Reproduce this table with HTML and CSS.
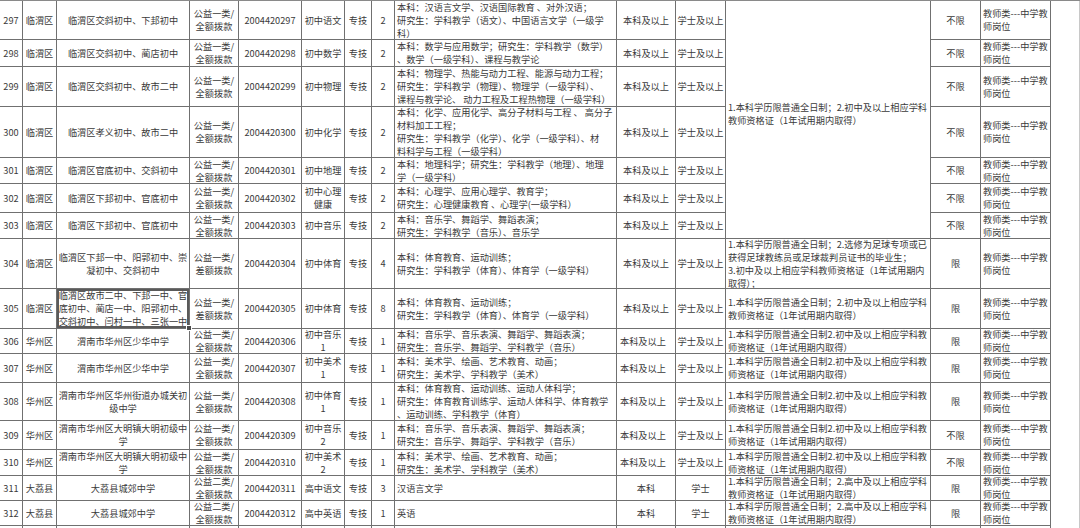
FILE: index.html
```html
<!DOCTYPE html>
<html lang="zh-CN">
<head>
<meta charset="utf-8">
<title>岗位表</title>
<link rel="stylesheet" href="styles.css">
</head>
<body>
<div class="sheet">
  <div class="blank"></div>

  <!-- 297 -->
  <div class="c"><span>297</span></div>
  <div class="c"><span>临渭区</span></div>
  <div class="c"><span>临渭区交斜初中、下邽初中</span></div>
  <div class="c"><span>公益一类/<br>全额拨款</span></div>
  <div class="c"><span>2004420297</span></div>
  <div class="c"><span>初中语文</span></div>
  <div class="c"><span>专技</span></div>
  <div class="c"><span>2</span></div>
  <div class="c l"><span>本科：汉语言文学、汉语国际教育 、对外汉语；<br>研究生：学科教学（语文）、中国语言文学（一级学<br>科）</span></div>
  <div class="c"><span>本科及以上</span></div>
  <div class="c"><span>学士及以上</span></div>
  <div class="c l merged"><span>1.本科学历限普通全日制；2.初中及以上相应学科<br>教师资格证（1年试用期内取得）</span></div>
  <div class="c"><span>不限</span></div>
  <div class="c l"><span>教师类---中学教<br>师岗位</span></div>

  <!-- 298 -->
  <div class="c"><span>298</span></div>
  <div class="c"><span>临渭区</span></div>
  <div class="c"><span>临渭区交斜初中、蔺店初中</span></div>
  <div class="c"><span>公益一类/<br>全额拨款</span></div>
  <div class="c"><span>2004420298</span></div>
  <div class="c"><span>初中数学</span></div>
  <div class="c"><span>专技</span></div>
  <div class="c"><span>2</span></div>
  <div class="c l"><span>本科：数学与应用数学；研究生：学科教学（数学）<br>、数学（一级学科）、课程与教学论</span></div>
  <div class="c"><span>本科及以上</span></div>
  <div class="c"><span>学士及以上</span></div>
  <div class="c"><span>不限</span></div>
  <div class="c l"><span>教师类---中学教<br>师岗位</span></div>

  <!-- 299 -->
  <div class="c"><span>299</span></div>
  <div class="c"><span>临渭区</span></div>
  <div class="c"><span>临渭区交斜初中、故市二中</span></div>
  <div class="c"><span>公益一类/<br>全额拨款</span></div>
  <div class="c"><span>2004420299</span></div>
  <div class="c"><span>初中物理</span></div>
  <div class="c"><span>专技</span></div>
  <div class="c"><span>2</span></div>
  <div class="c l"><span>本科：物理学、热能与动力工程、能源与动力工程；<br>研究生：学科教学（物理）、物理学（一级学科）、<br>课程与教学论、 动力工程及工程热物理（一级学科）</span></div>
  <div class="c"><span>本科及以上</span></div>
  <div class="c"><span>学士及以上</span></div>
  <div class="c"><span>不限</span></div>
  <div class="c l"><span>教师类---中学教<br>师岗位</span></div>

  <!-- 300 -->
  <div class="c"><span>300</span></div>
  <div class="c"><span>临渭区</span></div>
  <div class="c"><span>临渭区孝义初中、故市二中</span></div>
  <div class="c"><span>公益一类/<br>全额拨款</span></div>
  <div class="c"><span>2004420300</span></div>
  <div class="c"><span>初中化学</span></div>
  <div class="c"><span>专技</span></div>
  <div class="c"><span>2</span></div>
  <div class="c l"><span>本科：化学、应用化学、高分子材料与工程 、 高分子<br>材料加工工程；<br>研究生：学科教学（化学）、化学（一级学科）、材<br>料科学与工程（一级学科）</span></div>
  <div class="c"><span>本科及以上</span></div>
  <div class="c"><span>学士及以上</span></div>
  <div class="c"><span>不限</span></div>
  <div class="c l"><span>教师类---中学教<br>师岗位</span></div>

  <!-- 301 -->
  <div class="c"><span>301</span></div>
  <div class="c"><span>临渭区</span></div>
  <div class="c"><span>临渭区官底初中、交斜初中</span></div>
  <div class="c"><span>公益一类/<br>全额拨款</span></div>
  <div class="c"><span>2004420301</span></div>
  <div class="c"><span>初中地理</span></div>
  <div class="c"><span>专技</span></div>
  <div class="c"><span>2</span></div>
  <div class="c l"><span>本科：地理科学；研究生：学科教学（地理）、地理<br>学（一级学科）</span></div>
  <div class="c"><span>本科及以上</span></div>
  <div class="c"><span>学士及以上</span></div>
  <div class="c"><span>不限</span></div>
  <div class="c l"><span>教师类---中学教<br>师岗位</span></div>

  <!-- 302 -->
  <div class="c"><span>302</span></div>
  <div class="c"><span>临渭区</span></div>
  <div class="c"><span>临渭区下邽初中、官底初中</span></div>
  <div class="c"><span>公益一类/<br>全额拨款</span></div>
  <div class="c"><span>2004420302</span></div>
  <div class="c"><span>初中心理<br>健康</span></div>
  <div class="c"><span>专技</span></div>
  <div class="c"><span>2</span></div>
  <div class="c l"><span>本科：心理学、应用心理学、教育学；<br>研究生：心理健康教育 、心理学(一级学科）</span></div>
  <div class="c"><span>本科及以上</span></div>
  <div class="c"><span>学士及以上</span></div>
  <div class="c"><span>不限</span></div>
  <div class="c l"><span>教师类---中学教<br>师岗位</span></div>

  <!-- 303 -->
  <div class="c"><span>303</span></div>
  <div class="c"><span>临渭区</span></div>
  <div class="c"><span>临渭区下邽初中、官底初中</span></div>
  <div class="c"><span>公益一类/<br>全额拨款</span></div>
  <div class="c"><span>2004420303</span></div>
  <div class="c"><span>初中音乐</span></div>
  <div class="c"><span>专技</span></div>
  <div class="c"><span>2</span></div>
  <div class="c l"><span>本科：音乐学、舞蹈学、舞蹈表演；<br>研究生：学科教学（音乐）、音乐学</span></div>
  <div class="c"><span>本科及以上</span></div>
  <div class="c"><span>学士及以上</span></div>
  <div class="c"><span>不限</span></div>
  <div class="c l"><span>教师类---中学教<br>师岗位</span></div>

  <!-- 304 -->
  <div class="c"><span>304</span></div>
  <div class="c"><span>临渭区</span></div>
  <div class="c"><span>临渭区下邽一中、阳郭初中、崇<br>凝初中、交斜初中</span></div>
  <div class="c"><span>公益一类/<br>差额拨款</span></div>
  <div class="c"><span>2004420304</span></div>
  <div class="c"><span>初中体育</span></div>
  <div class="c"><span>专技</span></div>
  <div class="c"><span>4</span></div>
  <div class="c l"><span>本科：体育教育、运动训练；<br>研究生：学科教学（体育）、体育学（一级学科）</span></div>
  <div class="c"><span>本科及以上</span></div>
  <div class="c"><span>学士及以上</span></div>
  <div class="c l"><span>1.本科学历限普通全日制；2.选修为足球专项或已<br>获得足球教练员或足球裁判员证书的毕业生；<br>3.初中及以上相应学科教师资格证（1年试用期内<br>取得）；</span></div>
  <div class="c"><span>限</span></div>
  <div class="c l"><span>教师类---中学教<br>师岗位</span></div>

  <!-- 305 -->
  <div class="c"><span>305</span></div>
  <div class="c"><span>临渭区</span></div>
  <div class="c sel"><span>临渭区故市二中、下邽一中、官<br>底初中、蔺店一中、阳郭初中、<br>交斜初中、闫村一中、三张一中</span></div>
  <div class="c"><span>公益一类/<br>差额拨款</span></div>
  <div class="c"><span>2004420305</span></div>
  <div class="c"><span>初中体育</span></div>
  <div class="c"><span>专技</span></div>
  <div class="c"><span>8</span></div>
  <div class="c l"><span>本科：体育教育、运动训练；<br>研究生：学科教学（体育）、体育学（一级学科）</span></div>
  <div class="c"><span>本科及以上</span></div>
  <div class="c"><span>学士及以上</span></div>
  <div class="c l"><span>1.本科学历限普通全日制；2.初中及以上相应学科<br>教师资格证（1年试用期内取得）</span></div>
  <div class="c"><span>限</span></div>
  <div class="c l"><span>教师类---中学教<br>师岗位</span></div>

  <!-- 306 -->
  <div class="c"><span>306</span></div>
  <div class="c"><span>华州区</span></div>
  <div class="c"><span>渭南市华州区少华中学</span></div>
  <div class="c"><span>公益一类/<br>全额拨款</span></div>
  <div class="c"><span>2004420306</span></div>
  <div class="c"><span>初中音乐<br>1</span></div>
  <div class="c"><span>专技</span></div>
  <div class="c"><span>1</span></div>
  <div class="c l"><span>本科：音乐学、音乐表演、舞蹈学、舞蹈表演；<br>研究生：音乐学、舞蹈学、学科教学（音乐）</span></div>
  <div class="c lft"><span>本科及以上</span></div>
  <div class="c"><span>学士及以上</span></div>
  <div class="c l"><span>1.本科学历限普通全日制2.初中及以上相应学科教<br>师资格证（1年试用期内取得）</span></div>
  <div class="c"><span>限</span></div>
  <div class="c l"><span>教师类---中学教<br>师岗位</span></div>

  <!-- 307 -->
  <div class="c"><span>307</span></div>
  <div class="c"><span>华州区</span></div>
  <div class="c"><span>渭南市华州区少华中学</span></div>
  <div class="c"><span>公益一类/<br>全额拨款</span></div>
  <div class="c"><span>2004420307</span></div>
  <div class="c"><span>初中美术<br>1</span></div>
  <div class="c"><span>专技</span></div>
  <div class="c"><span>1</span></div>
  <div class="c l"><span>本科：美术学、绘画、艺术教育、动画；<br>研究生：美术学、学科教学（美术）</span></div>
  <div class="c lft"><span>本科及以上</span></div>
  <div class="c"><span>学士及以上</span></div>
  <div class="c l"><span>1.本科学历限普通全日制2.初中及以上相应学科教<br>师资格证（1年试用期内取得）</span></div>
  <div class="c"><span>限</span></div>
  <div class="c l"><span>教师类---中学教<br>师岗位</span></div>

  <!-- 308 -->
  <div class="c"><span>308</span></div>
  <div class="c"><span>华州区</span></div>
  <div class="c"><span>渭南市华州区华州街道办城关初<br>级中学</span></div>
  <div class="c"><span>公益一类/<br>全额拨款</span></div>
  <div class="c"><span>2004420308</span></div>
  <div class="c"><span>初中体育<br>1</span></div>
  <div class="c"><span>专技</span></div>
  <div class="c"><span>1</span></div>
  <div class="c l"><span>本科：体育教育、运动训练、运动人体科学；<br>研究生：体育教育训练学、运动人体科学、体育教学<br>、运动训练、学科教学（体育）</span></div>
  <div class="c lft"><span>本科及以上</span></div>
  <div class="c"><span>学士及以上</span></div>
  <div class="c l"><span>1.本科学历限普通全日制2.初中及以上相应学科教<br>师资格证（1年试用期内取得）</span></div>
  <div class="c"><span>限</span></div>
  <div class="c l"><span>教师类---中学教<br>师岗位</span></div>

  <!-- 309 -->
  <div class="c"><span>309</span></div>
  <div class="c"><span>华州区</span></div>
  <div class="c"><span>渭南市华州区大明镇大明初级中<br>学</span></div>
  <div class="c"><span>公益一类/<br>全额拨款</span></div>
  <div class="c"><span>2004420309</span></div>
  <div class="c"><span>初中音乐<br>2</span></div>
  <div class="c"><span>专技</span></div>
  <div class="c"><span>1</span></div>
  <div class="c l"><span>本科：音乐学、音乐表演、舞蹈学、舞蹈表演；<br>研究生：音乐学、舞蹈学、学科教学（音乐）</span></div>
  <div class="c lft"><span>本科及以上</span></div>
  <div class="c"><span>学士及以上</span></div>
  <div class="c l"><span>1.本科学历限普通全日制2.初中及以上相应学科教<br>师资格证（1年试用期内取得）</span></div>
  <div class="c"><span>不限</span></div>
  <div class="c l"><span>教师类---中学教<br>师岗位</span></div>

  <!-- 310 -->
  <div class="c"><span>310</span></div>
  <div class="c"><span>华州区</span></div>
  <div class="c"><span>渭南市华州区大明镇大明初级中<br>学</span></div>
  <div class="c"><span>公益一类/<br>全额拨款</span></div>
  <div class="c"><span>2004420310</span></div>
  <div class="c"><span>初中美术<br>2</span></div>
  <div class="c"><span>专技</span></div>
  <div class="c"><span>1</span></div>
  <div class="c l"><span>本科：美术学、绘画、艺术教育、动画；<br>研究生：美术学、学科教学（美术）</span></div>
  <div class="c lft"><span>本科及以上</span></div>
  <div class="c"><span>学士及以上</span></div>
  <div class="c l"><span>1.本科学历限普通全日制2.初中及以上相应学科教<br>师资格证（1年试用期内取得）</span></div>
  <div class="c"><span>不限</span></div>
  <div class="c l"><span>教师类---中学教<br>师岗位</span></div>

  <!-- 311 -->
  <div class="c"><span>311</span></div>
  <div class="c"><span>大荔县</span></div>
  <div class="c"><span>大荔县城郊中学</span></div>
  <div class="c"><span>公益二类/<br>全额拨款</span></div>
  <div class="c"><span>2004420311</span></div>
  <div class="c"><span>高中语文</span></div>
  <div class="c"><span>专技</span></div>
  <div class="c"><span>3</span></div>
  <div class="c l"><span>汉语言文学</span></div>
  <div class="c"><span>本科</span></div>
  <div class="c"><span>学士</span></div>
  <div class="c l"><span>1.本科学历限普通全日制；2.高中及以上相应学科<br>教师资格证（1年试用期内取得）</span></div>
  <div class="c"><span>限</span></div>
  <div class="c l"><span>教师类---中学教<br>师岗位</span></div>

  <!-- 312 -->
  <div class="c"><span>312</span></div>
  <div class="c"><span>大荔县</span></div>
  <div class="c"><span>大荔县城郊中学</span></div>
  <div class="c"><span>公益二类/<br>全额拨款</span></div>
  <div class="c"><span>2004420312</span></div>
  <div class="c"><span>高中英语</span></div>
  <div class="c"><span>专技</span></div>
  <div class="c"><span>1</span></div>
  <div class="c l"><span>英语</span></div>
  <div class="c"><span>本科</span></div>
  <div class="c"><span>学士</span></div>
  <div class="c l"><span>1.本科学历限普通全日制；2.高中及以上相应学科<br>教师资格证（1年试用期内取得）</span></div>
  <div class="c"><span>限</span></div>
  <div class="c l"><span>教师类---中学教<br>师岗位</span></div>

  <!-- partial next row -->
  <div class="c"></div><div class="c"></div><div class="c"></div><div class="c"></div>
  <div class="c"></div><div class="c"></div><div class="c"></div><div class="c"></div>
  <div class="c"></div><div class="c"></div><div class="c"></div><div class="c"></div>
  <div class="c"></div><div class="c"></div>
</div>
</body>
</html>
```

FILE: styles.css
```css
html, body {
  margin: 0;
  padding: 0;
  background: #ffffff;
}

body {
  font-family: "Noto Sans CJK SC", "Noto Sans", sans-serif;
  font-size: 9.2px;
  color: #3a3a3a;
  overflow: hidden;
}

.sheet {
  display: grid;
  width: 1080px;
  height: 528px;
  overflow: hidden;
  border-top: 1px solid #8a8a8a;
  grid-template-columns: 23px 34px 133px 49px 63px 43px 27px 23px 222px 59px 50px 205px 50px 70px 29px;
  grid-template-rows: 39px 27px 40px 51px 26px 29px 26px 50px 40px 25px 29px 38px 29px 26px 25px 25px 30px;
}

.c {
  box-sizing: border-box;
  border-right: 1px solid #707070;
  border-bottom: 1px solid #707070;
  display: flex;
  align-items: center;
  justify-content: center;
  text-align: center;
  overflow: hidden;
  white-space: nowrap;
  line-height: 13px;
  min-width: 0;
}

.c > span {
  display: block;
}

.l {
  justify-content: flex-start;
  text-align: left;
  padding-left: 2px;
}

.lft {
  justify-content: flex-start;
  padding-left: 3px;
}

.merged {
  grid-row: span 7;
  padding-bottom: 12px;
}

.sel {
  position: relative;
  overflow: visible;
  box-shadow: inset 0 0 0 2px #5a5a5a;
  z-index: 2;
}

.sel::after {
  content: "";
  position: absolute;
  right: -3px;
  bottom: -3px;
  width: 4px;
  height: 4px;
  background: #4a4a4a;
  border: 1px solid #ffffff;
}

.blank {
  grid-column: 15;
  grid-row: 1 / -1;
  box-sizing: border-box;
  border-right: 1px solid #c8c8c8;
}
```
